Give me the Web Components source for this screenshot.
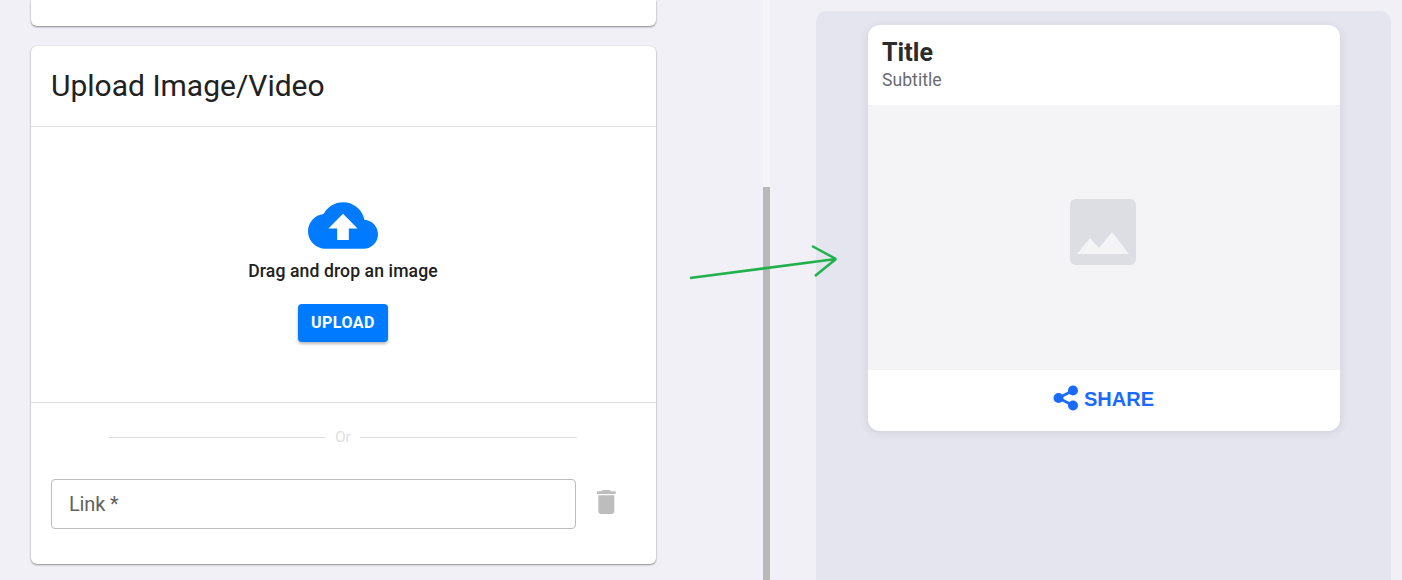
<!DOCTYPE html>
<html lang="en"><head><meta charset="utf-8"><title>Upload</title>
<style>
html,body{margin:0;height:580px;overflow:hidden;background:#f0f0f6;font-family:Roboto,sans-serif}
</style></head><body>
<app-shell>
  <form-column slot="left">
    <form-card class="stub"></form-card>
    <upload-card></upload-card>
  </form-column>
  <scroll-rail slot="rail"></scroll-rail>
  <preview-panel slot="right"><media-card></media-card></preview-panel>
  <annotation-arrow slot="overlay"></annotation-arrow>
</app-shell>
<script>
function def(name,html){customElements.define(name,class extends HTMLElement{
  constructor(){super();this.attachShadow({mode:'open'}).innerHTML=html;}
});}
def('app-shell',`<style>
:host{display:flex;height:580px;width:1402px;position:relative;overflow:hidden}
::slotted([slot=left]){width:732px;padding-left:31px;flex:none}
</style><slot name="left"></slot><slot name="rail"></slot><slot name="right"></slot><slot name="overlay"></slot>`);
def('form-column',`<style>
:host{display:flex;flex-direction:column;gap:20px;box-sizing:content-box}
::slotted(*){width:625px}
</style><slot></slot>`);
def('form-card',`<style>
:host{display:block;height:26px;background:#fff;border-radius:0 0 6px 6px;box-shadow:0 1px 2px rgba(0,0,0,.45)}
</style>`);
def('upload-card',`<style>
:host{display:block;height:518px;background:#fff;border-radius:6px;box-shadow:0 1px 2px rgba(0,0,0,.4),0 0 2px rgba(0,0,0,.08);color:#212121;box-sizing:border-box}
header{height:81px;box-sizing:border-box;padding:0 20px 2px;display:flex;align-items:center;border-bottom:1px solid #e0e0e0;font-size:30px;font-weight:400}
.drop{height:276px;box-sizing:border-box;border-bottom:1px solid #e0e0e0;display:flex;flex-direction:column;align-items:center;padding:75px 1px 0 0}
.drop svg{display:block;width:70px;height:47px}
.hint{font-size:17.6px;font-weight:500;line-height:20px;margin-top:12px;letter-spacing:.1px}
button{margin-top:23px;width:90px;height:38px;background:#007bff;color:#fff;border:0;border-radius:4px;font:700 16px/36px Roboto,sans-serif;letter-spacing:.5px;box-shadow:0 2px 3px rgba(0,0,0,.28);padding:0}
.or{display:flex;align-items:center;justify-content:center;gap:9px;margin:25px 79px 0 78px;height:18px;color:#e0e0e0;font-size:15px}
.or i{flex:1;height:1px;background:#e0e0e0}
.row{display:flex;align-items:flex-start;margin:33px 0 0 20px;gap:21px}
.field{width:525px;height:50px;box-sizing:border-box;border:1px solid #bdbdbd;border-radius:4px;padding-left:17px;display:flex;align-items:center;font-size:20px;color:#616161;letter-spacing:-.15px}
.row svg{width:18.670px;height:24px;margin-top:11px;display:block}
</style>
<header>Upload Image/Video</header>
<div class="drop">
  <svg viewBox="0 4 24 16"><path fill="#007bff" d="M19.35 10.04C18.67 6.59 15.64 4 12 4 9.11 4 6.6 5.64 5.35 8.04 2.34 8.36 0 10.91 0 14c0 3.31 2.69 6 6 6h13c2.76 0 5-2.24 5-5 0-2.64-2.05-4.78-4.65-4.96zM14 13v4h-4v-4H7l5-5 5 5h-3z"/></svg>
  <div class="hint">Drag and drop an image</div>
  <button>UPLOAD</button>
</div>
<div class="or"><i></i><span>Or</span><i></i></div>
<div class="row">
  <div class="field">Link *</div>
  <svg viewBox="5 3 14 18"><path fill="#bdbdbd" d="M6 19c0 1.100.9 2 2 2h8c1.100 0 2-.9 2-2V7H6v12zM19 4h-3.500l-1-1h-5l-1 1H5v2h14V4z"/></svg>
</div>`);
def('scroll-rail',`<style>
:host{display:flex;flex-direction:column;width:7px;flex:none;background:#f5f5f7}
div{margin-top:187px;flex:1;background:#b9b9b9}
</style><div></div>`);
def('preview-panel',`<style>
:host{display:flex;align-items:flex-start;width:575px;margin:11px 0 0 46px;height:620px;background:#e5e5ef;border-radius:10px 10px 0 0;padding:14px 0 0 52px;box-sizing:border-box;flex:none}
</style><slot></slot>`);
def('media-card',`<style>
:host{display:flex;flex-direction:column;width:472px;height:406px;background:#fff;border-radius:12px;overflow:hidden;box-shadow:0 2px 10px rgba(60,60,90,.12)}
.head{height:80px;box-sizing:border-box;padding:13px 14px 0}
.t{font:700 25px/30px Roboto,sans-serif;color:#2b2b2b;letter-spacing:.1px}
.s{font:400 17.6px/22px Roboto,sans-serif;color:#6b6b6f;margin-top:1px;letter-spacing:.03px}
.img{height:265px;background:#f4f4f7;display:flex;align-items:center;justify-content:center;padding:0 2px 12px 0;box-sizing:border-box}
.img svg{width:68px;height:68px;display:block;filter:blur(.5px)}
.foot{flex:1;display:flex;align-items:center;justify-content:center;gap:5px;color:#1a6aff;font:700 20px "Liberation Sans",sans-serif;padding:0 1px 2px 0}
.foot svg{width:26px;height:26px;display:block;margin-bottom:4px}
</style>
<div class="head"><div class="t">Title</div><div class="s">Subtitle</div></div>
<div class="img"><svg viewBox="0 0 68 68"><rect x="1" y="1" width="66" height="66" rx="6" fill="#dddee3"/><path fill="#f4f4f7" d="M8 56 21 40 30 50 43 34 60 56Z"/></svg></div>
<div class="foot"><svg viewBox="0 0 26 26"><circle cx="20" cy="5.500" r="5" fill="#1a6aff"/><circle cx="5.500" cy="13" r="5" fill="#1a6aff"/><circle cx="20" cy="20.500" r="5" fill="#1a6aff"/><path stroke="#1a6aff" stroke-width="2.600" d="M20 5.500 5.500 13 20 20.500" fill="none"/></svg><span>SHARE</span></div>`);
def('annotation-arrow',`<style>
:host{position:absolute;left:0;top:0;width:1402px;height:580px;pointer-events:none}
svg{display:block}
</style><svg width="1402" height="580"><path d="M690 278 836 259M812 246 836 259 815 276" fill="none" stroke="#22b14c" stroke-width="2.500" stroke-linejoin="bevel"/></svg>`);
</script>
</body></html>
